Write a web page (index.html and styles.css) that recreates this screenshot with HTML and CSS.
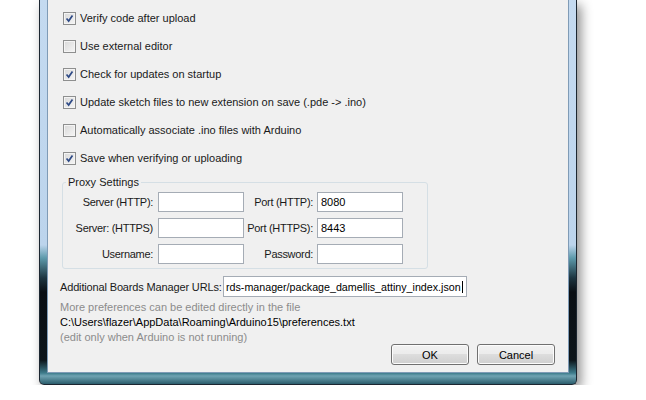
FILE: index.html
```html
<!DOCTYPE html>
<html lang="en">
<head>
  <meta charset="UTF-8">
  <title>Preferences</title>
  <link rel="stylesheet" href="styles.css">
</head>
<body>

  <div class="window">
    <div class="content">

      <div class="check-row">
        <span class="checkbox checked"><svg viewBox="0 0 13 13"><path d="M3 6.5 L5.5 9.5 L10 3"/></svg></span>
        <span>Verify code after upload</span>
      </div>
      <div class="check-row">
        <span class="checkbox"></span>
        <span>Use external editor</span>
      </div>
      <div class="check-row">
        <span class="checkbox checked"><svg viewBox="0 0 13 13"><path d="M3 6.5 L5.5 9.5 L10 3"/></svg></span>
        <span>Check for updates on startup</span>
      </div>
      <div class="check-row">
        <span class="checkbox checked"><svg viewBox="0 0 13 13"><path d="M3 6.5 L5.5 9.5 L10 3"/></svg></span>
        <span>Update sketch files to new extension on save (.pde -&gt; .ino)</span>
      </div>
      <div class="check-row">
        <span class="checkbox"></span>
        <span>Automatically associate .ino files with Arduino</span>
      </div>
      <div class="check-row">
        <span class="checkbox checked"><svg viewBox="0 0 13 13"><path d="M3 6.5 L5.5 9.5 L10 3"/></svg></span>
        <span>Save when verifying or uploading</span>
      </div>

      <fieldset class="proxy">
        <legend>Proxy Settings</legend>
        <div class="proxy-grid">
          <label class="lbl-left">Server (HTTP):</label>
          <div class="field"></div>
          <label class="lbl-right">Port (HTTP):</label>
          <div class="field">8080</div>

          <label class="lbl-left">Server: (HTTPS)</label>
          <div class="field"></div>
          <label class="lbl-right">Port (HTTPS):</label>
          <div class="field">8443</div>

          <label class="lbl-left">Username:</label>
          <div class="field"></div>
          <label class="lbl-right">Password:</label>
          <div class="field"></div>
        </div>
      </fieldset>

      <div class="url-row">
        <label class="url-label">Additional Boards Manager URLs:</label>
        <div class="field url-field"><span class="caret">rds-manager/package_damellis_attiny_index.json</span></div>
      </div>

      <div class="footer">
        <div class="info">
          <div class="muted">More preferences can be edited directly in the file</div>
          <div>C:\Users\flazer\AppData\Roaming\Arduino15\preferences.txt</div>
          <div class="muted">(edit only when Arduino is not running)</div>
        </div>
        <div class="buttons">
          <button>OK</button>
          <button>Cancel</button>
        </div>
      </div>

    </div>
  </div>

</body>
</html>
```

FILE: styles.css
```css
body {
  margin: 0;
  background: #fff;
  font-family: 'Liberation Sans', Arial, sans-serif;
  font-size: 11px;
  color: #1a1a1a;
  white-space: nowrap;
}

.window {
  margin-left: 39px;
  width: 522px;
  padding: 0 7px 11px 7px;
  border: 1px solid #1c2630;
  border-top: none;
  border-radius: 0 0 5px 5px;
  background: linear-gradient(to bottom, #c4daf0 0, #bcd4ec 245px, #5d9aab 258px, #1d3540 278px, #0a0f14 292px, #0c1419 360px, #3d7b8b 373px, #6fa3b2 376px, #2b5d6c 384px);
  box-shadow: 4px 5px 12px rgba(0, 0, 0, 0.45);
}

.content {
  background: #f0f0f0;
  border: 1px solid #7f9bb6;
  border-top: none;
  padding: 4px 0 7px 0;
}

.check-row {
  display: flex;
  align-items: center;
  gap: 4px;
  height: 28px;
  padding-left: 15px;
}

.checkbox {
  width: 11px;
  height: 11px;
  border: 1px solid #8e8f8f;
  background: linear-gradient(135deg, #d8d8d8, #f6f6f6);
  box-shadow: inset 0 0 0 1px #f4f4f4;
  display: flex;
}

.checkbox svg {
  width: 11px;
  height: 11px;
}

.checkbox path {
  fill: none;
  stroke: #2e4a86;
  stroke-width: 2;
}

.proxy {
  margin: 4px 0 0 14px;
  width: 340px;
  padding: 3px 24px 4px 0;
  border: 1px solid #d5dfe5;
  border-radius: 3px;
}

.proxy legend {
  margin-left: 3px;
  padding: 0 2px;
  line-height: 13px;
}

.proxy-grid {
  display: grid;
  grid-template-columns: 95px 86px 73px 86px;
  grid-auto-rows: 20px;
  row-gap: 6px;
}

.lbl-left, .lbl-right {
  display: flex;
  align-items: center;
  justify-content: flex-end;
  letter-spacing: -0.3px;
}

.lbl-left {
  padding-right: 5px;
}

.lbl-right {
  padding-right: 4px;
}

.field {
  background: #fff;
  border: 1px solid #a5acb5;
  box-sizing: border-box;
  padding-left: 3px;
  display: flex;
  align-items: center;
  color: #000;
  overflow: hidden;
}

.url-row {
  display: flex;
  align-items: center;
  margin: 7px 0 0 12px;
}

.url-label {
  width: 163px;
  flex-shrink: 0;
  letter-spacing: -0.15px;
}

.url-field {
  width: 244px;
  height: 21px;
  padding: 0 1px 0 2px;
  font-size: 10.7px;
}

.caret {
  border-right: 1px solid #000;
  padding-right: 1px;
}

.footer {
  display: flex;
  justify-content: space-between;
  margin: 3px 13px 0 12px;
}

.info {
  align-self: flex-start;
  line-height: 15px;
  color: #000;
}

.muted {
  color: #8c8c8c;
}

.buttons {
  align-self: flex-end;
  display: flex;
  gap: 8px;
  margin-top: 44px;
}

button {
  width: 78px;
  height: 21px;
  font-family: 'Liberation Sans', Arial, sans-serif;
  font-size: 11px;
  color: #000;
  border: 1px solid #707070;
  border-radius: 3px;
  background: linear-gradient(to bottom, #f2f2f2 0, #ebebeb 50%, #dddddd 50%, #cfcfcf 100%);
  box-shadow: inset 0 0 0 1px #fcfcfc;
  padding: 0;
}
```
